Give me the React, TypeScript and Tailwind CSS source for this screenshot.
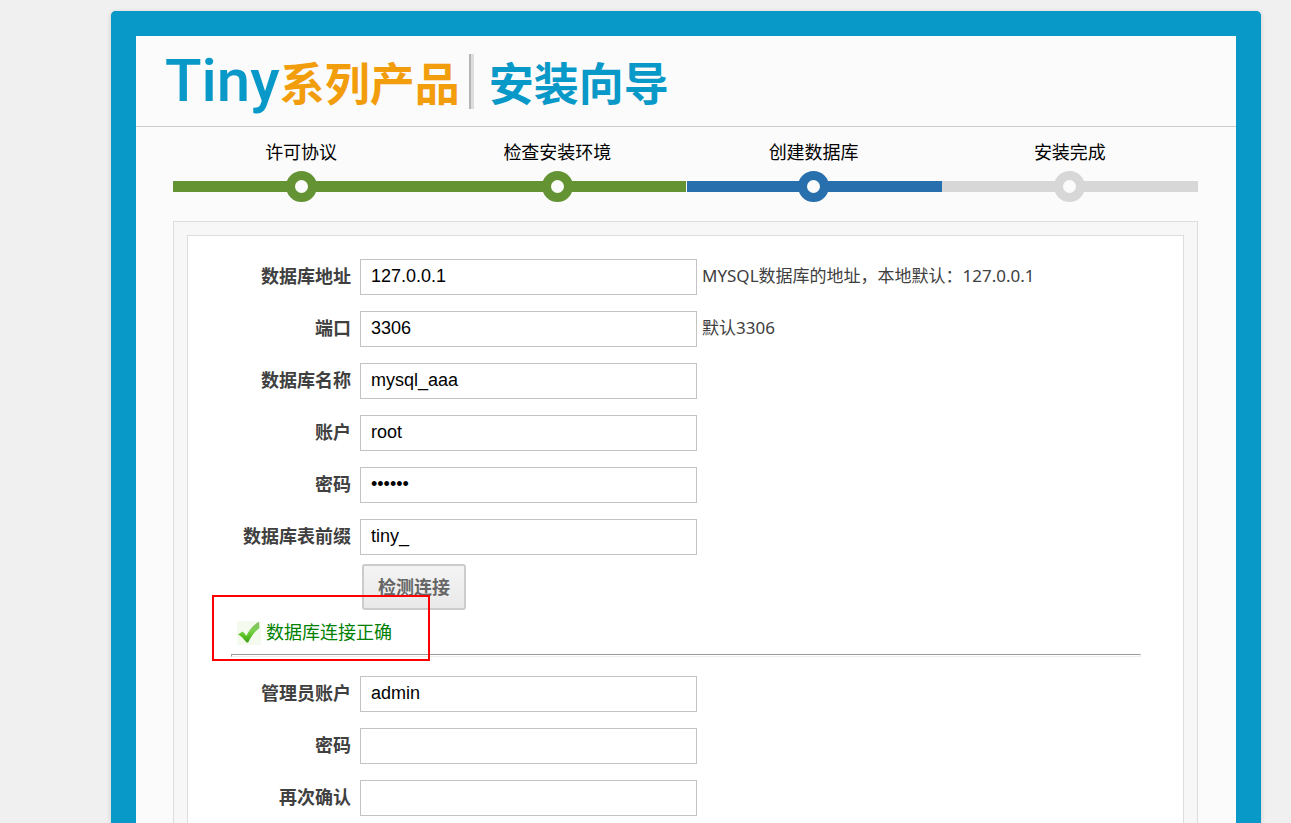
import React from 'react';

type StepState = 'done' | 'current' | 'pending';

const barColor: Record<StepState, string> = {
  done: 'bg-[#649334]',
  current: 'border-l border-[#fbfbfb] bg-[#286fae]',
  pending: 'bg-[#d7d7d7]',
};

const ringColor: Record<StepState, string> = {
  done: 'border-[#649334]',
  current: 'border-[#286fae]',
  pending: 'border-[#d7d7d7]',
};

const steps: { label: string; state: StepState }[] = [
  { label: '许可协议', state: 'done' },
  { label: '检查安装环境', state: 'done' },
  { label: '创建数据库', state: 'current' },
  { label: '安装完成', state: 'pending' },
];

function Step({ label, state }: { label: string; state: StepState }) {
  return (
    <li className="flex flex-1 flex-col items-center">
      <span className="text-[18px] leading-6 text-black">{label}</span>
      <div className="mt-[6px] grid w-full grid-cols-1 grid-rows-1 place-items-center">
        <div className={`col-start-1 row-start-1 h-[11px] w-full ${barColor[state]}`} />
        <div
          className={`col-start-1 row-start-1 size-[31px] rounded-full border-[9px] bg-[#fbfbfb] ${ringColor[state]}`}
        />
      </div>
    </li>
  );
}

interface FieldProps {
  id: string;
  label: string;
  value?: string;
  type?: string;
  hint?: string;
}

function Field({ id, label, value = '', type = 'text', hint }: FieldProps) {
  return (
    <div className="flex items-center">
      <label htmlFor={id} className="w-[120px] shrink-0 text-right text-[18px] leading-6 font-bold text-[#404040]">
        {label}
      </label>
      <input
        id={id}
        type={type}
        defaultValue={value}
        className="ml-[9px] h-9 w-[337px] border border-[#c3c3c3] bg-white px-[10px] pb-[2px] text-[18px] text-black outline-none"
      />
      {hint && (
        <span className="ml-[5px] pb-[2px] font-['Noto_Sans','Noto_Sans_CJK_SC',sans-serif] text-[17px] leading-6 text-[#404040]">
          {hint}
        </span>
      )}
    </div>
  );
}

function CheckIcon() {
  return (
    <svg viewBox="0 0 24 24" className="size-6 shrink-0" aria-hidden="true">
      <defs>
        <linearGradient id="tick" x1="0" y1="0" x2="0" y2="1">
          <stop offset="0" stopColor="#86c065" />
          <stop offset="0.45" stopColor="#7ad04c" />
          <stop offset="0.7" stopColor="#55c020" />
          <stop offset="1" stopColor="#3f9d16" />
        </linearGradient>
      </defs>
      <rect width="24" height="24" fill="#f4faee" />
      <path
        d="M1 13.5 L5.5 10.5 C7.2 11.8 8.4 13.2 9.3 14.9 C12 9 16 4 22 .8 L22.4 7 C17.6 10.8 14 15.6 11.2 21.4 L9.6 21.6 C7.2 18.2 4.6 15.4 1 13.5 Z"
        fill="url(#tick)"
      />
    </svg>
  );
}

export default function App() {
  return (
    <div className="flex min-h-screen flex-col bg-[#f0f0f0] pt-[11px] pr-[30px] pl-[111px] font-['Liberation_Sans','Noto_Sans_CJK_SC',sans-serif]">
      <div className="flex flex-1 flex-col rounded-t-[5px] border-25 border-b-0 border-[#0999c8] bg-[#fbfbfb] shadow-[0_1px_5px_rgba(0,0,0,0.15)]">
        <header className="flex h-[91px] items-center border-b border-[#cccccc] pl-[29px]">
          <h1 className="flex items-center whitespace-nowrap">
            <span className="font-['Roboto',sans-serif] text-[60px] leading-[72px] font-medium text-[#0999c8]">
              Tiny
            </span>
            <span className="pt-[10px] text-[45px] leading-[60px] font-bold text-[#f29d0c]">系列产品</span>
            <span className="ml-[9px] h-[55px] w-[5px] border-l-2 border-[#b5b5b5] bg-[#dddddd]" />
            <span className="ml-[15px] pt-[10px] text-[45px] leading-[60px] font-bold text-[#0999c8]">安装向导</span>
          </h1>
        </header>

        <main className="flex flex-1 flex-col pr-[38px] pl-[37px]">
          <ol className="flex pt-[14px]">
            {steps.map((step) => (
              <Step key={step.label} label={step.label} state={step.state} />
            ))}
          </ol>

          <div className="mt-[19px] flex flex-1 flex-col border border-b-0 border-[#dddddd] bg-[#f7f7f7] px-[13px] pt-[13px]">
            <form className="flex-1 border border-b-0 border-[#dddddd] bg-white pt-[23px] pr-[42px] pb-[7px] pl-[43px]">
              <div className="flex flex-col gap-4">
                <Field id="host" label="数据库地址" value="127.0.0.1" hint="MYSQL数据库的地址，本地默认：127.0.0.1" />
                <Field id="port" label="端口" value="3306" hint="默认3306" />
                <Field id="name" label="数据库名称" value="mysql_aaa" />
                <Field id="user" label="账户" value="root" />
                <Field id="password" label="密码" value="123456" type="password" />
                <Field id="prefix" label="数据库表前缀" value="tiny_" />
              </div>

              <button
                type="button"
                className="mt-[9px] ml-[131px] block h-[46px] rounded-[3px] border-2 border-[#cccccc] bg-linear-to-b from-[#f4f4f4] to-[#e9e9e9] px-[14px] pt-[2px] text-[18px] leading-6 font-bold text-[#666666]"
              >
                检测连接
              </button>

              <div className="relative mt-[11px] flex items-center gap-[5px] pb-2 pl-[6px]">
                <CheckIcon />
                <span className="text-[18px] leading-6 text-[#008000]">数据库连接正确</span>
                <div className="pointer-events-none absolute -top-[26px] -left-[19px] h-[66px] w-[218px] border-2 border-[#ff0000]" />
              </div>
              <hr className="mt-px mb-[19px] h-[3px] border border-t-[#9a9a9a] border-r-[#eeeeee] border-b-[#eeeeee] border-l-[#9a9a9a]" />

              <div className="flex flex-col gap-4">
                <Field id="admin" label="管理员账户" value="admin" />
                <Field id="admin-password" label="密码" type="password" />
                <Field id="admin-confirm" label="再次确认" type="password" />
              </div>
            </form>
          </div>
        </main>
      </div>
    </div>
  );
}
